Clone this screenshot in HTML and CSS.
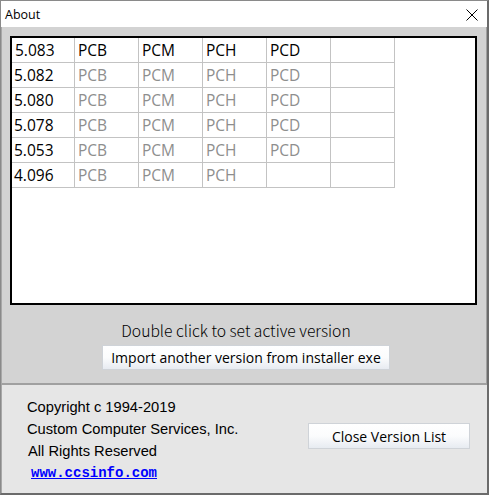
FILE: index.html
```html
<!DOCTYPE html>
<html>
<head>
<meta charset="utf-8">
<title>About</title>
<link rel="stylesheet" href="styles.css">
</head>
<body>
<div class="window">
  <div class="titlebar">
    <span class="title">About</span>
    <svg class="close" width="12" height="12" viewBox="0 0 12 12"><path d="M0.5 0.5 L11.5 11.5 M11.5 0.5 L0.5 11.5" stroke="#000" stroke-width="1" fill="none"/></svg>
  </div>
  <div class="main">
    <div class="listbox">
      <div class="grid">
        <div class="cell h">5.083</div><div class="cell h">PCB</div><div class="cell h">PCM</div><div class="cell h">PCH</div><div class="cell h">PCD</div><div class="cell"></div>
        <div class="cell v">5.082</div><div class="cell">PCB</div><div class="cell">PCM</div><div class="cell">PCH</div><div class="cell">PCD</div><div class="cell"></div>
        <div class="cell v">5.080</div><div class="cell">PCB</div><div class="cell">PCM</div><div class="cell">PCH</div><div class="cell">PCD</div><div class="cell"></div>
        <div class="cell v">5.078</div><div class="cell">PCB</div><div class="cell">PCM</div><div class="cell">PCH</div><div class="cell">PCD</div><div class="cell"></div>
        <div class="cell v">5.053</div><div class="cell">PCB</div><div class="cell">PCM</div><div class="cell">PCH</div><div class="cell">PCD</div><div class="cell"></div>
        <div class="cell v">4.096</div><div class="cell">PCB</div><div class="cell">PCM</div><div class="cell">PCH</div><div class="cell"></div><div class="cell"></div>
      </div>
    </div>
    <div class="hint">Double click to set active version</div>
    <button class="btn import">Import another version from installer exe</button>
  </div>
  <div class="footer">
    <div class="info">
      <div class="line l1">Copyright c 1994-2019</div>
      <div class="line l2">Custom Computer Services, Inc.</div>
      <div class="line l3">All Rights Reserved</div>
      <a class="link" href="#">www.ccsinfo.com</a>
    </div>
    <button class="btn close-btn">Close Version List</button>
  </div>
</div>
</body>
</html>
```
FILE: styles.css
```css
html, body {
  margin: 0;
  padding: 0;
  background: #ffffff;
}
.window {
  width: 489px;
  height: 495px;
  box-sizing: border-box;
  border-left: 1px solid #8a8a8a;
  border-top: 1px solid #8a8a8a;
  border-right: 2px solid #6b6b6b;
  border-bottom: 2px solid #6b6b6b;
  display: flex;
  flex-direction: column;
  overflow: hidden;
}
.titlebar {
  height: 26px;
  flex: none;
  background: #ffffff;
  display: flex;
  align-items: center;
  justify-content: space-between;
  padding: 0 9px 0 4px;
}
.title {
  font-family: "Open Sans", "Noto Sans", sans-serif;
  font-size: 12.5px;
  color: #000;
}
.close {
  display: block;
  margin-top: 1px;
}
.main {
  height: 358px;
  flex: none;
  background: #d3d3d3;
  border-left: 1px solid #a8a8a8;
  border-right: 1px solid #a0a0a0;
  border-bottom: 2px solid #a0a0a0;
  box-sizing: border-box;
  padding: 9px 0 0 8px;
  display: flex;
  flex-direction: column;
  align-items: flex-start;
}
.listbox {
  width: 467px;
  height: 269px;
  box-sizing: border-box;
  border: 2px solid #000;
  background: #fff;
}
.grid {
  display: grid;
  grid-template-columns: 63px repeat(5, 64px);
  grid-auto-rows: 25px;
}
.cell {
  box-sizing: border-box;
  border-right: 1px solid #c3c3c3;
  border-bottom: 1px solid #c3c3c3;
  font-family: "Open Sans", "Noto Sans", sans-serif;
  font-size: 15.5px;
  color: #8e8e8e;
  padding-left: 3px;
  line-height: 24px;
  white-space: nowrap;
  overflow: hidden;
}
.cell.h {
  color: #000;
}
.cell.v {
  color: #000;
  padding-left: 2px;
}
.hint {
  align-self: stretch;
  text-align: center;
  margin-top: 16px;
  margin-right: 24px;
  font-family: "Noto Sans CJK JP", "DejaVu Sans", sans-serif;
  font-weight: 300;
  font-size: 15.7px;
  line-height: 20px;
  color: #000;
}
.btn {
  font-family: "Open Sans", "Noto Sans", sans-serif;
  font-size: 14px;
  color: #000;
  background: linear-gradient(#ffffff, #fbfcfd 50%, #e7ebf1);
  border: 1px solid #cfd3d8;
  border-radius: 0;
  padding: 0;
  margin: 0;
  box-sizing: border-box;
}
.import {
  width: 288px;
  height: 25px;
  margin-top: 4px;
  margin-left: 92px;
}
.footer {
  flex: 1;
  background: #e6e6e6;
  border-left: 1px solid #a8a8a8;
  display: flex;
  align-items: flex-start;
  padding: 11px 0 0 25px;
}
.info {
  display: flex;
  flex-direction: column;
  width: 280px;
}
.line {
  font-family: "Liberation Sans", Arial, sans-serif;
  font-size: 14.7px;
  color: #000;
  line-height: 22px;
}
.l3 {
  padding-left: 1px;
}
.link {
  font-family: "Liberation Mono", "Courier New", monospace;
  font-weight: bold;
  font-size: 14px;
  color: #0000ff;
  text-decoration: underline;
  line-height: 22px;
  padding-left: 4px;
  align-self: flex-start;
}
.close-btn {
  width: 162px;
  height: 26px;
  margin-top: 27px;
  margin-left: 1px;
  font-size: 14px;
}
```
